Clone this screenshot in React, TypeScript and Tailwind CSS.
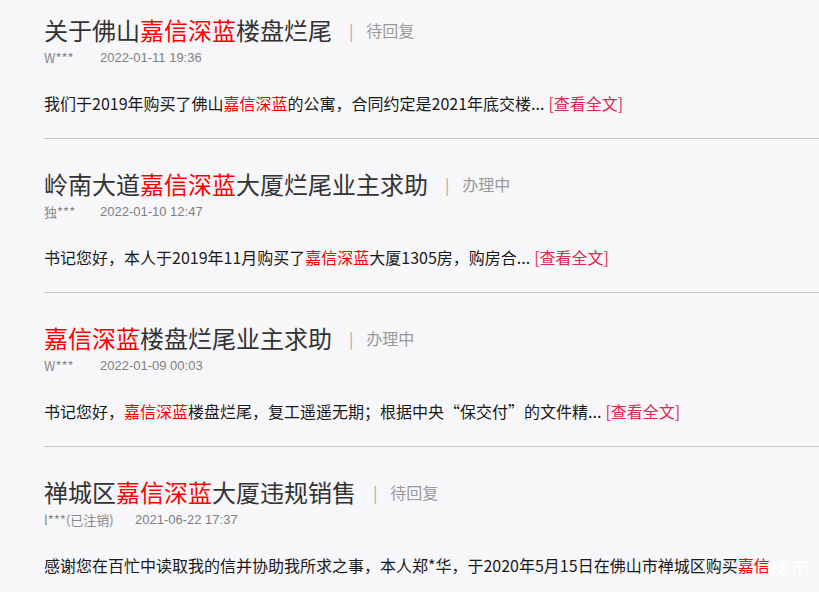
import React from "react";

type Seg = { t: string; red?: boolean };
type Item = {
  title: Seg[];
  status: string;
  user: string;
  date: string;
  body: Seg[];
  more: boolean;
};

const items: Item[] = [
  {
    title: [{ t: "关于佛山" }, { t: "嘉信深蓝", red: true }, { t: "楼盘烂尾" }],
    status: "待回复",
    user: "W***",
    date: "2022-01-11 19:36",
    body: [
      { t: "我们于2019年购买了佛山" },
      { t: "嘉信深蓝", red: true },
      { t: "的公寓，合同约定是2021年底交楼..." },
    ],
    more: true,
  },
  {
    title: [{ t: "岭南大道" }, { t: "嘉信深蓝", red: true }, { t: "大厦烂尾业主求助" }],
    status: "办理中",
    user: "独***",
    date: "2022-01-10 12:47",
    body: [
      { t: "书记您好，本人于2019年11月购买了" },
      { t: "嘉信深蓝", red: true },
      { t: "大厦1305房，购房合..." },
    ],
    more: true,
  },
  {
    title: [{ t: "嘉信深蓝", red: true }, { t: "楼盘烂尾业主求助" }],
    status: "办理中",
    user: "W***",
    date: "2022-01-09 00:03",
    body: [
      { t: "书记您好，" },
      { t: "嘉信深蓝", red: true },
      { t: "楼盘烂尾，复工遥遥无期；根据中央“保交付”的文件精..." },
    ],
    more: true,
  },
  {
    title: [{ t: "禅城区" }, { t: "嘉信深蓝", red: true }, { t: "大厦违规销售" }],
    status: "待回复",
    user: "l***(已注销)",
    date: "2021-06-22 17:37",
    body: [
      { t: "感谢您在百忙中读取我的信并协助我所求之事，本人郑*华，于2020年5月15日在佛山市禅城区购买" },
      { t: "嘉信", red: true },
    ],
    more: false,
  },
];

const FONT = { fontFamily: '"Noto Sans CJK SC", "Noto Sans", sans-serif' };

export default function App() {
  return (
    <div
      className="relative w-[819px] h-[592px] overflow-hidden bg-[#f7f6f9] pl-[44px]"
      style={FONT}
    >
      {items.map((it, i) => (
        <div
          key={i}
          className={
            i === 0
              ? "pt-[15px] pb-[25px] border-b border-[#c6c6c6]"
              : "pt-[30px] pb-[25px] border-b border-[#c6c6c6]"
          }
        >
          <div className="flex items-center h-[30px] whitespace-nowrap">
            <span className="text-[24px] leading-[30px] text-[#333333]">
              {it.title.map((s, j) => (
                <span key={j} className={s.red ? "text-[#ff0000]" : ""}>
                  {s.t}
                </span>
              ))}
            </span>
            <span className="ml-[17px] mr-[13px] text-[16px] text-[#aaaaaa]">|</span>
            <span className="text-[16px] text-[#999999]">{it.status}</span>
          </div>
          <div className="mt-[5px] flex h-[16px] items-center text-[13px] leading-[16px] text-[#888888] whitespace-nowrap">
            <span className="shrink-0 whitespace-nowrap" style={{ width: it.user.length > 5 ? 91 : 56 }}>
              {it.user}
            </span>
            <span className="text-[13px] text-[#808080]" style={{ fontFamily: '"Liberation Sans", Arial, sans-serif' }}>
              {it.date}
            </span>
          </div>
          <div className="mt-[27px] h-[20px] text-[16px] leading-[20px] text-[#1a1a1a] whitespace-nowrap">
            {it.body.map((s, j) => (
              <span key={j} className={s.red ? "text-[#ff0000]" : ""}>
                {s.t}
              </span>
            ))}
            {it.more && <span className="ml-[4px] text-[#e0284f]">[查看全文]</span>}
          </div>
        </div>
      ))}
      <div className="absolute left-[770px] top-[555px] text-[20px] leading-[26px] text-white whitespace-nowrap">
        楼市
      </div>
    </div>
  );
}
